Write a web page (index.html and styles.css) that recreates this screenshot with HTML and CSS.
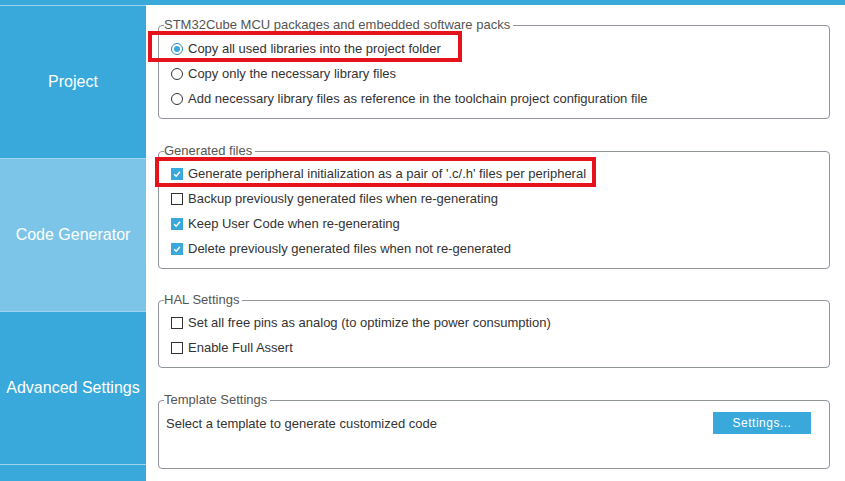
FILE: index.html
```html
<!DOCTYPE html>
<html>

<head>
    <meta charset="UTF-8">
    <title>Project Manager - Code Generator</title>
    <link rel="stylesheet" href="styles.css">
</head>

<body>
    <div class="window">
        <nav class="sidebar">
            <div class="nav-item">Project</div>
            <div class="nav-item active">Code Generator</div>
            <div class="nav-item">Advanced Settings</div>
            <div class="nav-item"></div>
        </nav>

        <main class="panel">
            <fieldset class="group packs">
                <legend>STM32Cube MCU packages and embedded software packs</legend>
                <label class="option">
                    <span class="radio checked"></span>Copy all used libraries into the project folder
                    <span class="highlight highlight-copy"></span>
                </label>
                <label class="option">
                    <span class="radio"></span>Copy only the necessary library files
                </label>
                <label class="option">
                    <span class="radio"></span>Add necessary library files as reference in the toolchain project configuration file
                </label>
            </fieldset>

            <fieldset class="group generated">
                <legend>Generated files</legend>
                <label class="option">
                    <span class="check checked"><svg viewBox="0 0 12 12"><path d="M2.6 6.2 L5 8.6 L9.6 3.4" /></svg></span>Generate peripheral initialization as a pair of '.c/.h' files per peripheral
                    <span class="highlight highlight-pair"></span>
                </label>
                <label class="option">
                    <span class="check"></span>Backup previously generated files when re-generating
                </label>
                <label class="option">
                    <span class="check checked"><svg viewBox="0 0 12 12"><path d="M2.6 6.2 L5 8.6 L9.6 3.4" /></svg></span>Keep User Code when re-generating
                </label>
                <label class="option">
                    <span class="check checked"><svg viewBox="0 0 12 12"><path d="M2.6 6.2 L5 8.6 L9.6 3.4" /></svg></span>Delete previously generated files when not re-generated
                </label>
            </fieldset>

            <fieldset class="group">
                <legend>HAL Settings</legend>
                <label class="option">
                    <span class="check"></span>Set all free pins as analog (to optimize the power consumption)
                </label>
                <label class="option">
                    <span class="check"></span>Enable Full Assert
                </label>
            </fieldset>

            <fieldset class="group template">
                <legend>Template Settings</legend>
                <div class="template-row">
                    <span>Select a template to generate customized code</span>
                    <button class="settings-btn">Settings...</button>
                </div>
            </fieldset>
        </main>
    </div>
</body>

</html>
```

FILE: styles.css
```css
body {
    margin: 0;
    font-family: 'Liberation Sans', Arial, sans-serif;
    font-size: 13px;
    color: #333;
    background: #fff;
    overflow: hidden;
}

.window {
    display: flex;
    height: 100vh;
}

/* left navigation */
.sidebar {
    width: 146px;
    flex-shrink: 0;
    background: #39a9db;
    padding-top: 5px;
    overflow: hidden;
}

.nav-item {
    height: 152px;
    border-top: 1px solid #9fd4ee;
    display: flex;
    align-items: center;
    justify-content: center;
    color: #fff;
    font-size: 16px;
}

.nav-item.active {
    background: #7dc5e8;
}

/* settings area */
.panel {
    flex: 1;
    border-top: 5px solid #39a9db;
    padding: 13px 15px 0 12px;
}

.group {
    margin: 0 0 25px;
    padding: 3px 12px 7px 5px;
    border: 1px solid #8f959b;
    border-radius: 4px;
    min-width: 0;
}

.group.packs {
    padding-top: 4px;
}

.group.generated {
    margin-bottom: 24px;
}

.group legend {
    padding: 0 3px 0 0;
    line-height: 14px;
    color: #555;
}

.option {
    position: relative;
    display: flex;
    align-items: center;
    gap: 5px;
    height: 25px;
    padding-left: 7px;
}

.radio {
    width: 10px;
    height: 10px;
    border: 1px solid #333;
    border-radius: 50%;
    display: flex;
    align-items: center;
    justify-content: center;
}

.radio.checked {
    border-color: #2f86b5;
}

.radio.checked::after {
    content: '';
    width: 6px;
    height: 6px;
    border-radius: 50%;
    background: #39a9db;
}

.check {
    width: 10px;
    height: 10px;
    border: 1px solid #333;
    background: #fff;
}

.check.checked {
    border-color: #39a9db;
    background: #39a9db;
}

.check svg {
    display: block;
    width: 10px;
    height: 10px;
}

.check svg path {
    fill: none;
    stroke: #fff;
    stroke-width: 1.8;
}

/* red annotation frames */
.highlight {
    position: absolute;
    border: 4px solid #e6131d;
    box-sizing: border-box;
    pointer-events: none;
}

.highlight-copy {
    left: -16px;
    top: -5px;
    width: 314px;
    height: 31px;
}

.highlight-pair {
    left: -9px;
    top: -4px;
    width: 441px;
    height: 30px;
}

.template {
    padding-bottom: 32px;
}

.template-row {
    display: flex;
    align-items: center;
    justify-content: space-between;
    height: 26px;
    padding: 0 6px 0 2px;
}

.settings-btn {
    width: 98px;
    height: 22px;
    border: none;
    background: #39a9db;
    color: #fff;
    font-family: inherit;
    font-size: 12px;
    letter-spacing: 0.5px;
    padding: 0;
}
```
